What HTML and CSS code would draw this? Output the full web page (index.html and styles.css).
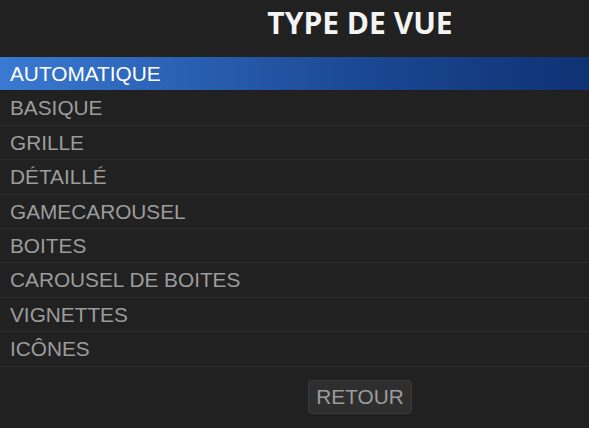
FILE: index.html
```html
<!DOCTYPE html>
<html>
<head>
    <meta charset="utf-8">
    <title>Type de vue</title>
    <link rel="stylesheet" href="styles.css">
</head>
<body>

<div class="menu">
    <h1 class="menu-title">TYPE DE VUE</h1>

    <ul class="menu-list">
        <li class="selected">AUTOMATIQUE</li>
        <li>BASIQUE</li>
        <li>GRILLE</li>
        <li>DÉTAILLÉ</li>
        <li>GAMECAROUSEL</li>
        <li>BOITES</li>
        <li>CAROUSEL DE BOITES</li>
        <li>VIGNETTES</li>
        <li>ICÔNES</li>
    </ul>

    <div class="menu-footer">
        <button class="back-button">RETOUR</button>
    </div>
</div>

</body>
</html>
```

FILE: styles.css
```css
html, body {
    margin: 0;
    height: 100%;
    overflow: hidden;
    background: #212121;
}

/* Menu (wider than the window, so it is cut on the right) */

.menu {
    width: 720px;
    font-family: "Liberation Sans", Arial, sans-serif;
}

.menu-title {
    margin: 0;
    height: 57px;
    line-height: 46px;
    text-align: center;
    font-family: "Open Sans", sans-serif;
    font-size: 30px;
    font-weight: 700;
    color: #f4f4f4;
}

.menu-list {
    list-style: none;
    margin: 0;
    padding: 0;
}

.menu-list li {
    box-sizing: border-box;
    height: 34.4px;
    line-height: 33px;
    padding-left: 10px;
    border-bottom: 1px solid #2b2b2b;
    font-size: 20.8px;
    color: #9c9c9c;
}

.menu-list li.selected {
    color: #ffffff;
    border-bottom-color: #1e1e1e;
    background: linear-gradient(to right, #3a7ad2, #1b4894 50%, #082660);
}

.menu-footer {
    display: flex;
    justify-content: center;
    padding-top: 13px;
}

.back-button {
    box-sizing: border-box;
    width: 104px;
    height: 34px;
    padding: 0;
    border: 1px solid #3a3a3a;
    border-radius: 4px;
    background: #2e2e2e;
    font-family: "Liberation Sans", Arial, sans-serif;
    font-size: 20.8px;
    color: #9c9c9c;
}
```
